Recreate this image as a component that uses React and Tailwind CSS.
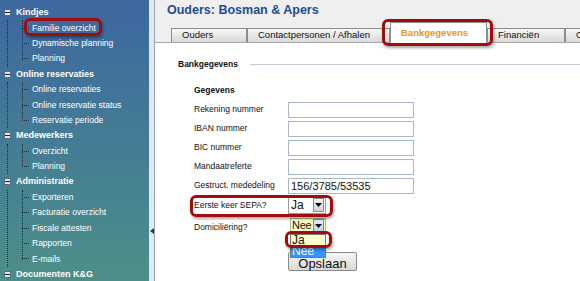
import React from 'react';

const menu = [
  { title: 'Kindjes', items: ['Familie overzicht', 'Dynamische planning', 'Planning'] },
  { title: 'Online reservaties', items: ['Online reservaties', 'Online reservatie status', 'Reservatie periode'] },
  { title: 'Medewerkers', items: ['Overzicht', 'Planning'] },
  { title: 'Administratie', items: ['Exporteren', 'Facturatie overzicht', 'Fiscale attesten', 'Rapporten', 'E-mails'] },
  { title: 'Documenten K&G', items: [] },
];

const fields = [
  { label: 'Rekening nummer', value: '' },
  { label: 'IBAN nummer', value: '' },
  { label: 'BIC nummer', value: '' },
  { label: 'Mandaatreferte', value: '' },
  { label: 'Gestruct. mededeling', value: '156/3785/53535' },
];

const Highlight = ({ className }) => (
  <div
    className={`absolute border-[3px] border-[#a10d0d] rounded-[6px] shadow-[1px_2px_3px_rgba(0,0,0,0.35)] pointer-events-none z-20 ${className}`}
  ></div>
);

const Arrow = ({ bg }) => (
  <span className={`w-[11px] h-[14px] shrink-0 flex items-center justify-center border border-[#8a8a8a] ${bg}`}>
    <svg width="7" height="4" viewBox="0 0 7 4">
      <path d="M0 0 L7 0 L3.5 4 Z" fill="#000" />
    </svg>
  </span>
);

const Sidebar = () => (
  <aside className="w-[149px] h-full shrink-0 bg-gradient-to-b from-[#3d679f] to-[#4d8f88] pt-[5px] text-white text-[8.5px] font-['Liberation_Sans',sans-serif] overflow-hidden">
    {menu.map((group) => (
      <div key={group.title} className="relative">
        <div className="h-[15.4px] flex items-center">
          <span className="ml-[4px] w-[7px] h-[7px] bg-[#dfe6ee] border border-[#5a6a80] flex items-center justify-center">
            <span className="w-[5px] h-[1px] bg-[#1b2a44]"></span>
          </span>
          <span className="ml-[5px] font-bold text-[9px]">{group.title}</span>
        </div>
        {group.items.length > 0 && (
          <div className="relative">
            <div className="absolute left-[7px] top-0 bottom-0 border-l border-dotted border-[#1d2a3a]"></div>
            <div className="absolute left-[22px] top-0 h-[calc(100%-7px)] border-l border-dotted border-[#1d2a3a]"></div>
            {group.items.map((item, i) => (
              <div key={item + i} className="h-[15.4px] flex items-center relative">
                <span className="ml-[22px] w-[7px] border-t border-dotted border-[#1d2a3a]"></span>
                <span className="ml-[3px] relative">
                  {item}
                  {item === 'Familie overzicht' && (
                    <Highlight className="-left-[8px] -top-[4px] w-[78px] h-[18px]" />
                  )}
                </span>
              </div>
            ))}
          </div>
        )}
      </div>
    ))}
  </aside>
);

const Splitter = () => (
  <div className="w-[6px] h-full shrink-0 bg-[#dfe9f5] border-r border-[#9aa4b0] flex items-center justify-center">
    <svg width="4" height="6" viewBox="0 0 4 6" className="mt-[181px]">
      <path d="M4 0 L0 3 L4 6 Z" fill="#333" />
    </svg>
  </div>
);

const Tab = ({ label, w }) => (
  <div
    className={`h-[14px] ${w} shrink-0 border border-[#8c8c8c] border-b-0 bg-gradient-to-b from-[#f7f7f7] to-[#d9d9d9] text-[9.5px] text-[#111] pl-[10px] flex items-center overflow-hidden whitespace-nowrap`}
  >
    {label}
  </div>
);

const App = () => {
  return (
    <div className="w-[580px] h-[281px] flex overflow-hidden bg-white font-['Liberation_Sans',sans-serif]">
      <Sidebar />
      <Splitter />
      <main className="flex-1 h-full flex flex-col min-w-0">
        <header className="h-[43px] shrink-0 bg-[#efefef] border-b border-[#a7a7a7] flex flex-col">
          <h1 className="pl-[12px] pt-[3px] text-[12.5px] font-bold text-[#1b4d98] leading-[15px]">
            Ouders: Bosman &amp; Apers
          </h1>
          <div className="mt-auto pl-[16px] flex items-end">
            <Tab label="Ouders" w="w-[76px]" />
            <Tab label="Contactpersonen / Afhalen" w="w-[143px]" />
            <div className="relative w-[97px] h-[21px] shrink-0 -mb-[1px] bg-white border border-[#8c8c8c] border-b-0 text-[9.5px] font-bold text-[#e8951c] pl-[10px] pt-[3px]">
              Bankgegevens
              <Highlight className="-left-[9px] -top-[4px] w-[111px] h-[27px]" />
            </div>
            <Tab label="Financiën" w="w-[78px]" />
            <Tab label="On" w="w-[40px]" />
          </div>
        </header>

        <section className="pl-[23px] pt-[15px] text-[8.5px] text-[#111]">
          <div className="flex items-center gap-[12px]">
            <span className="font-bold">Bankgegevens</span>
            <span className="flex-1 h-[1px] bg-[#c3cad8]"></span>
          </div>
          <div className="pl-[16px] pt-[13px]">
            <div className="font-bold">Gegevens</div>
            <div className="mt-[5px] flex flex-col gap-[3px]">
              {fields.map((f) => (
                <div key={f.label} className="flex items-center">
                  <span className="w-[94px]">{f.label}</span>
                  <div className="w-[126px] h-[16px] border border-[#a9b7c9] bg-white text-[11px] leading-[14px] pl-[2px]">
                    {f.value}
                  </div>
                </div>
              ))}
              <div className="relative flex items-center h-[17px]">
                <span className="w-[94px]">Eerste keer SEPA?</span>
                <div className="w-[38px] h-[17px] border border-[#9b9b9b] bg-white flex items-center justify-between pl-[2px] pr-[1px] text-[12px]">
                  <span>Ja</span>
                  <Arrow bg="bg-gradient-to-b from-[#f3f3f3] to-[#d2d2d2]" />
                </div>
                <Highlight className="-left-[4px] -top-[2px] w-[143px] h-[22px]" />
              </div>
              <div className="flex items-start h-[16px] mt-[1px]">
                <span className="w-[96px] pt-[3px]">Domiciliëring?</span>
                <div className="relative z-10">
                  <div className="w-[36px] h-[16px] border border-[#9ec0a0] bg-[#ffffc4] flex items-center justify-between pl-[1px] pr-[1px] text-[11px] tracking-[-0.3px]">
                    <span>Nee</span>
                    <Arrow bg="bg-gradient-to-b from-[#e4f0fb] to-[#b6d3f0]" />
                  </div>
                  <div className="absolute left-0 top-[16px] w-[36px] border border-[#7a7a7a] bg-white text-[12px] leading-[11px]">
                    <div className="relative bg-[#ffffcc] pl-[1px] h-[11px]">
                      Ja
                      <Highlight className="-left-[6px] -top-[4px] w-[47px] h-[17px]" />
                    </div>
                    <div className="bg-[#3399ff] text-white pl-[1px] h-[11px]">Nee</div>
                  </div>
                </div>
              </div>
              <div className="pl-[94px] mt-[15px]">
                <button className="w-[69px] h-[19px] border border-[#8a8a8a] rounded-[2px] bg-gradient-to-b from-[#f6f6f6] to-[#d8d8d8] text-[13px] leading-[17px] pt-[2px] text-[#111]">
                  Opslaan
                </button>
              </div>
            </div>
          </div>
        </section>
      </main>
    </div>
  );
};

export default App;
